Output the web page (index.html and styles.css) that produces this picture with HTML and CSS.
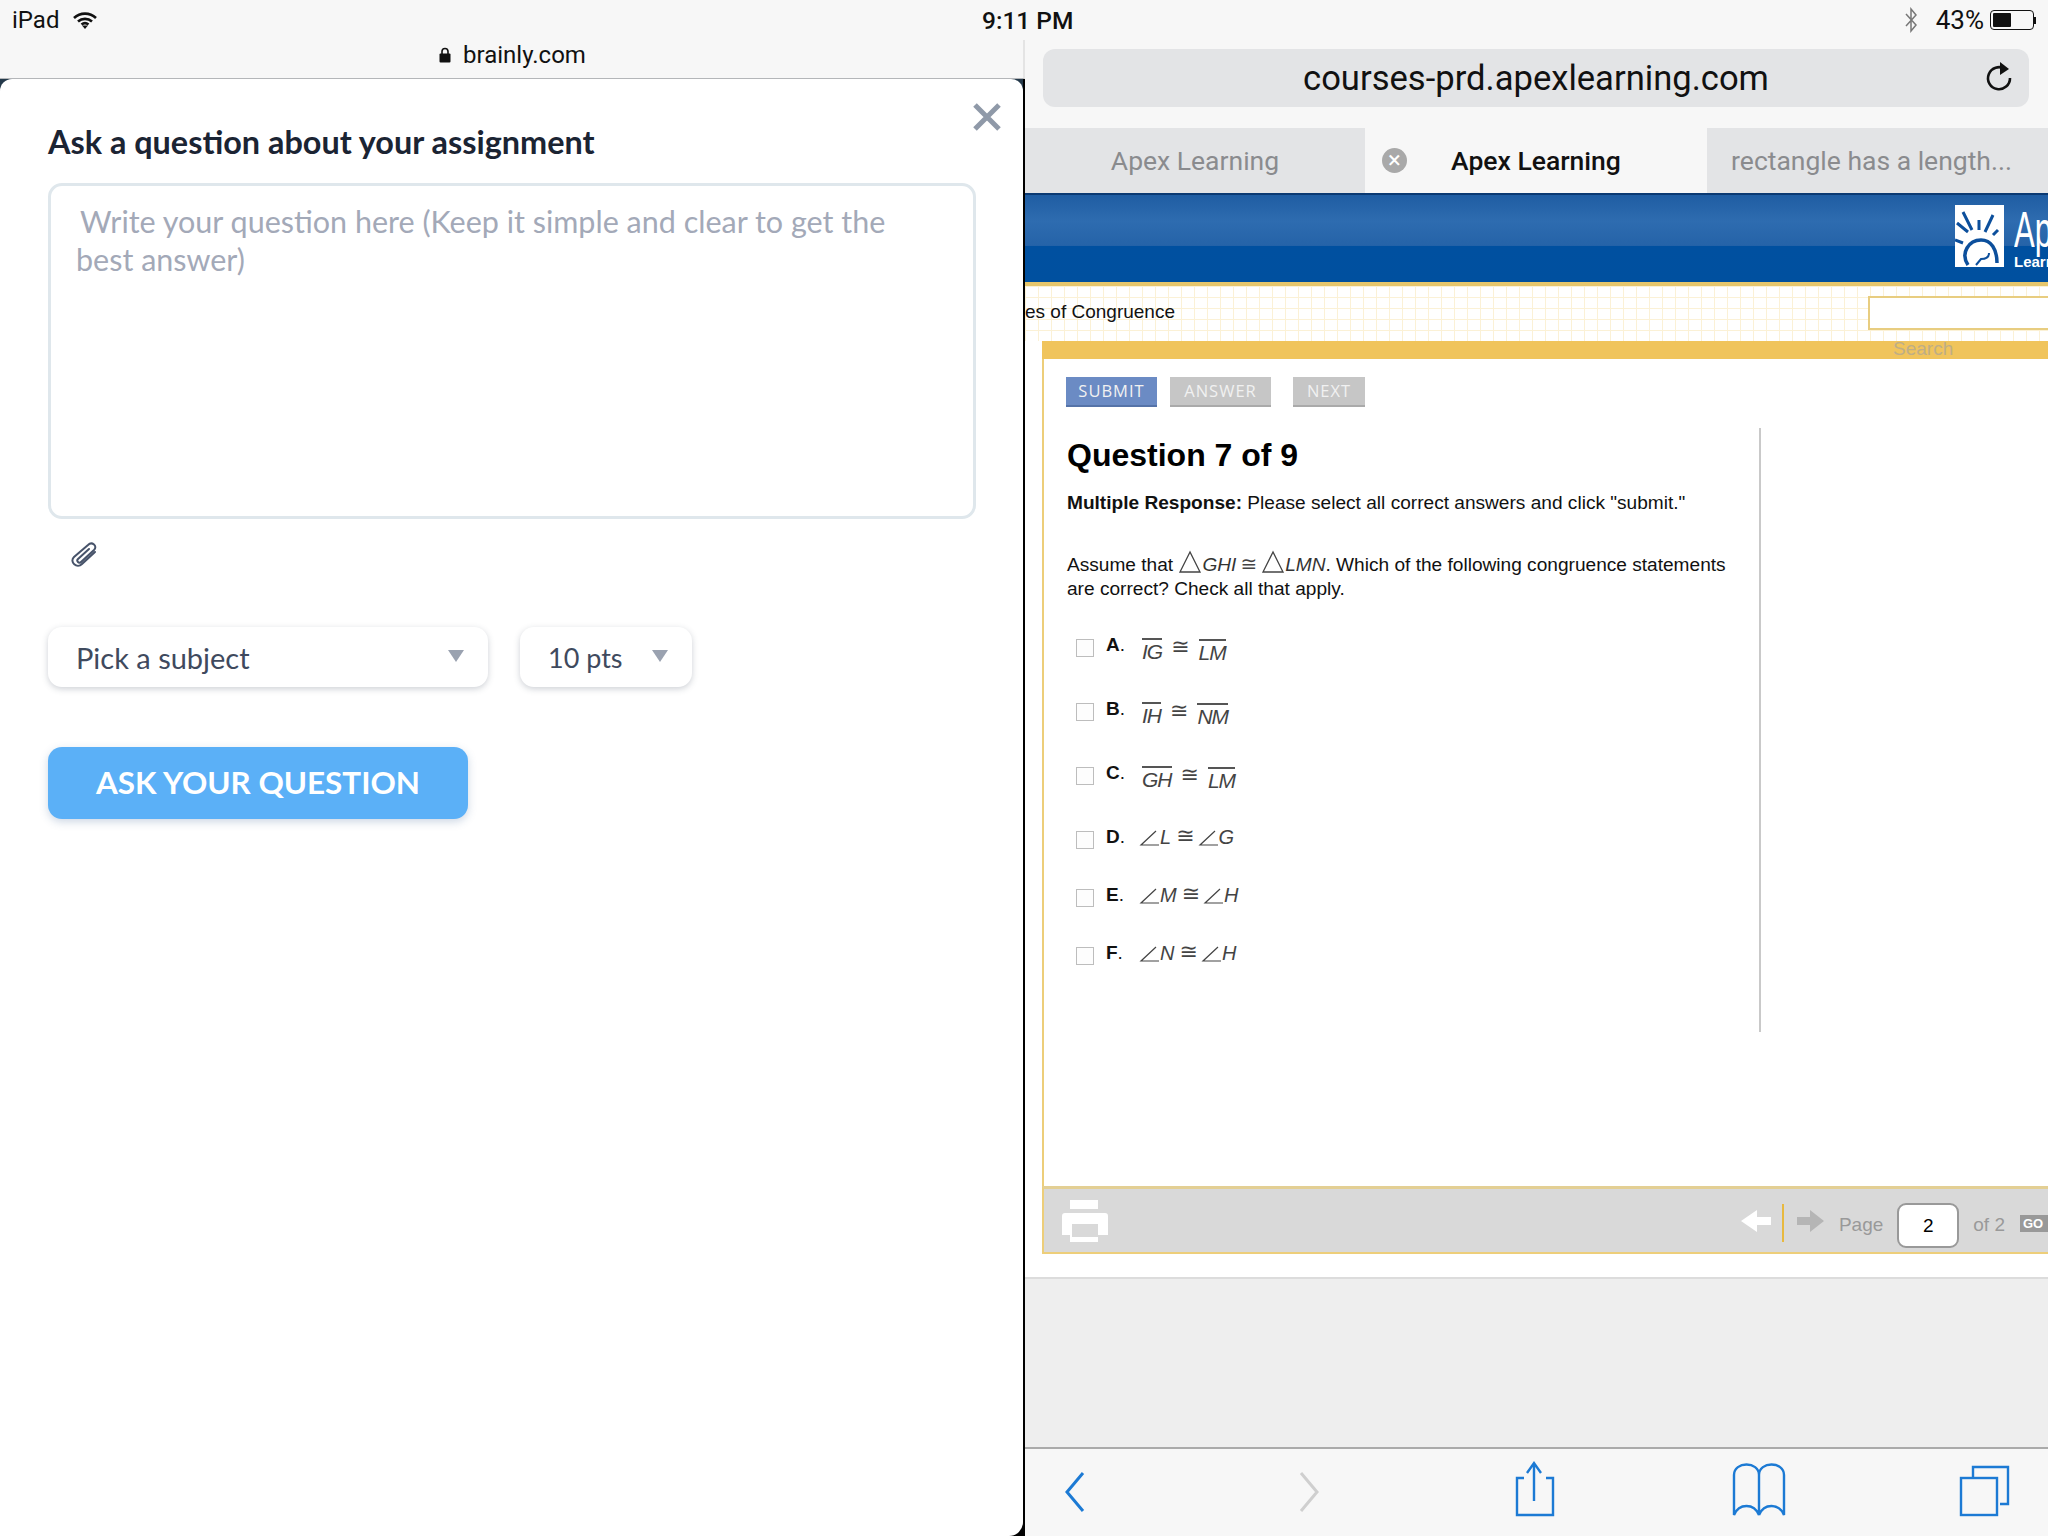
FILE: index.html
```html
<!DOCTYPE html>
<html lang="en">
<head>
  <meta charset="UTF-8">
  <title>Split view</title>
  <link rel="stylesheet" href="styles.css">
</head>
<body>
  <svg class="defs" width="0" height="0">
    <symbol id="angle" viewBox="0 0 20 16"><path d="M17 1 2 15h18" fill="none" stroke="#444" stroke-width="1.2"/></symbol>
    <symbol id="tri" viewBox="0 0 24 24"><path d="M12 2 2 22h20z" fill="none" stroke="#444" stroke-width="1.3"/></symbol>
  </svg>

  <div class="status">
    <div class="status-left">
      <span>iPad</span>
      <svg class="wifi" width="26" height="18" viewBox="0 0 26 18"><path d="M2 7a16 16 0 0 1 22 0M6 10.500a10.500 10.500 0 0 1 14 0M9.500 13.500a5.500 5.500 0 0 1 7 0" fill="none" stroke="#111" stroke-width="2.600"/><path d="M13 18l-3-3.500h6z" fill="#111"/></svg>
    </div>
    <div class="status-time">9:11 PM</div>
    <div class="status-right">
      <svg width="12" height="26" viewBox="0 0 12 26"><path d="M1 7l10 11-5 6V2l5 6L1 19" fill="none" stroke="#777" stroke-width="1.500"/></svg>
      <span>43%</span>
      <div class="battery"><div class="battery-fill"></div></div>
      <div class="battery-tip"></div>
    </div>
  </div>

  <div class="panes">
    <!-- left app: brainly -->
    <section class="left">
      <div class="left-url">
        <svg width="12" height="16" viewBox="0 0 12 16"><path d="M3 7V4.500a3 3 0 0 1 6 0V7" fill="none" stroke="#111" stroke-width="1.600"/><rect x="0.500" y="6.500" width="11" height="9" rx="1" fill="#111"/></svg>
        <span>brainly.com</span>
      </div>
      <div class="modal">
        <svg class="close" width="30" height="30" viewBox="0 0 30 30"><path d="M3 3l24 24M27 3 3 27" stroke="#8f99a8" stroke-width="5"/></svg>
        <h2 class="modal-title">Ask a question about your assignment</h2>
        <div class="question-box">
          <div class="placeholder"><span class="first-line">Write your question here (Keep it simple and clear to get the</span><br>best answer)</div>
        </div>
        <div class="attach">
          <svg width="30" height="26" viewBox="0 0 30 26"><path d="M20 7 9 17c-2 2 1 5 3 3L25 8c4-4-2-9-6-5L5 15c-5 5 3 12 8 7L26 10" fill="none" stroke="#47536a" stroke-width="2" stroke-linecap="round"/></svg>
        </div>
        <div class="selects">
          <div class="select select-subject"><span>Pick a subject</span><i class="caret"></i></div>
          <div class="select select-pts"><span>10 pts</span><i class="caret"></i></div>
        </div>
        <div class="ask-btn">ASK YOUR QUESTION</div>
      </div>
    </section>

    <!-- right app: safari -->
    <section class="right">
      <div class="addr-wrap">
        <div class="addr">
          <span>courses-prd.apexlearning.com</span>
          <svg class="reload" width="28" height="32" viewBox="0 0 28 32"><path d="M20 9a11 11 0 1 0 5 9" fill="none" stroke="#111" stroke-width="2.600"/><path d="M15 2l9 7-9 6z" fill="#111"/></svg>
        </div>
      </div>
      <div class="tabs">
        <div class="tab">Apex Learning</div>
        <div class="tab tab-active">
          <span class="tab-x">×</span>
          Apex Learning
        </div>
        <div class="tab tab-last">rectangle has a length...</div>
      </div>

      <div class="banner">
        <svg class="logo" width="49" height="62" viewBox="0 0 49 62">
          <rect width="49" height="62" fill="#fff"/>
          <path d="M8 7l9 18M24 15v10M38 10l-8 17M43 25l-5 5M2 18l11 9M0 35l8 3" stroke="#0c4f9c" stroke-width="3"/>
          <path d="M13 60C5 48 14 35 26 35c10 0 16 9 16 23" fill="none" stroke="#0c4f9c" stroke-width="3.500"/>
          <path d="M21 60l5-6c5 0 8-2 8-6" fill="none" stroke="#0c4f9c" stroke-width="2"/>
        </svg>
        <div class="logo-text">
          <div class="logo-big">Apex</div>
          <div class="logo-small">Learning</div>
        </div>
      </div>

      <div class="trail">
        <span class="trail-text">es of Congruence</span>
        <div class="search-box"></div>
      </div>
      <div class="frame">
        <div class="gold-band"><span>Search</span></div>
        <div class="frame-body">
          <div class="actions">
            <div class="act act-submit">SUBMIT</div>
            <div class="act act-answer">ANSWER</div>
            <div class="act act-next">NEXT</div>
          </div>
          <div class="question">
            <h1>Question 7 of 9</h1>
            <p class="instr"><b>Multiple Response:</b> Please select all correct answers and click "submit."</p>
            <p class="stem">Assume that <svg class="tri" width="24" height="24"><use href="#tri"/></svg><i>GHI</i><span class="cong">≅</span><svg class="tri" width="24" height="24"><use href="#tri"/></svg><i>LMN</i>. Which of the following congruence statements are correct? Check all that apply.</p>

            <div class="opts">
              <div class="opt">
                <div class="check"></div><div class="letter"><b>A</b>.</div>
                <div class="math gap-a"><span class="seg">IG</span><span class="cong">≅</span><span class="seg seg-low">LM</span></div>
              </div>
              <div class="opt">
                <div class="check"></div><div class="letter"><b>B</b>.</div>
                <div class="math gap-a"><span class="seg">IH</span><span class="cong">≅</span><span class="seg seg-low">NM</span></div>
              </div>
              <div class="opt">
                <div class="check"></div><div class="letter"><b>C</b>.</div>
                <div class="math gap-a"><span class="seg">GH</span><span class="cong">≅</span><span class="seg seg-low">LM</span></div>
              </div>
              <div class="opt opt-short">
                <div class="check"></div><div class="letter"><b>D</b>.</div>
                <div class="math gap-b"><svg class="ang" width="20" height="16"><use href="#angle"/></svg><i>L</i><span class="cong">≅</span><svg class="ang" width="20" height="16"><use href="#angle"/></svg><i>G</i></div>
              </div>
              <div class="opt opt-short">
                <div class="check"></div><div class="letter"><b>E</b>.</div>
                <div class="math gap-b"><svg class="ang" width="20" height="16"><use href="#angle"/></svg><i>M</i><span class="cong">≅</span><svg class="ang" width="20" height="16"><use href="#angle"/></svg><i>H</i></div>
              </div>
              <div class="opt opt-short">
                <div class="check"></div><div class="letter"><b>F</b>.</div>
                <div class="math gap-b"><svg class="ang" width="20" height="16"><use href="#angle"/></svg><i>N</i><span class="cong">≅</span><svg class="ang" width="20" height="16"><use href="#angle"/></svg><i>H</i></div>
              </div>
            </div>
          </div>
        </div>
        <div class="pager">
          <svg class="printer" width="46" height="42" viewBox="0 0 46 42">
            <rect x="8" y="0" width="28" height="9" fill="#fff"/>
            <path d="M3 13h40a3 3 0 0 1 3 3v19H36v7H8v-7H0V16a3 3 0 0 1 3-3z" fill="#fff"/>
            <rect x="10" y="24" width="26" height="13" fill="#d9d9d9"/>
          </svg>
          <div class="pager-right">
            <svg class="pg-arrow" width="30" height="22" viewBox="0 0 30 22"><path d="M0 11 16 0v7h14v8H16v7z" fill="#fff"/></svg>
            <div class="pager-sep"></div>
            <svg class="pg-arrow" width="27" height="22" viewBox="0 0 27 22"><path d="M27 11 13 0v7H0v8h13v7z" fill="#b5b5b5"/></svg>
            <span class="pg-word">Page</span>
            <div class="pg-input">2</div>
            <span class="pg-of">of 2</span>
            <div class="pg-go">GO</div>
          </div>
        </div>
      </div>
      <div class="below-white"></div>
      <div class="below-grey"></div>
      <div class="toolbar">
        <svg width="1023" height="89" viewBox="-1 0 1023 89">
          <g fill="none" stroke="#1c7ad4" stroke-width="2.400">
            <path d="M57 26 41 45l16 19" stroke-width="3"/>
            <path d="M275 26l16 19-16 19" stroke="#cfcfcf" stroke-width="3"/>
            <path d="M498 31h-7v37h36V31h-7M508 54V16M501 26l7-10 7 10"/>
            <path d="M708 40V28c0-14 25-14 25 0v40c-5-12-20-12-25 0zM733 28c0-14 25-14 25 0v40c-5-12-20-12-25 0"/>
            <path d="M947 31V20h35v37h-8"/>
            <rect x="935" y="31" width="36" height="37"/>
          </g>
        </svg>
      </div>
    </section>
  </div>
</body>
</html>
```

FILE: styles.css
```css
* {
  box-sizing: border-box;
}
html, body {
  margin: 0;
  height: 100%;
}
body {
  width: 2048px;
  height: 1536px;
  overflow: hidden;
  display: flex;
  flex-direction: column;
  background: #f7f7f7;
  font-family: "Liberation Sans", sans-serif;
  color: #000;
}
.defs {
  position: absolute;
}

/* status bar */
.status {
  height: 40px;
  flex: none;
  display: flex;
  justify-content: space-between;
  align-items: center;
  padding: 0 12px;
  font-family: Roboto, sans-serif;
  font-size: 24px;
  color: #111;
  position: relative;
}
.status-left {
  display: flex;
  align-items: center;
  gap: 13px;
}
.status-time {
  position: absolute;
  left: 982px;
  font-size: 24.500px;
  font-weight: 500;
}
.status-right {
  display: flex;
  align-items: center;
}
.status-right span {
  margin-left: 19px;
  margin-right: 6px;
  font-size: 26px;
}
.battery {
  width: 44px;
  height: 20px;
  border: 1px solid #111;
  border-radius: 4px;
  padding: 2px;
}
.battery-fill {
  width: 18px;
  height: 100%;
  background: #111;
  border-radius: 1px;
}
.battery-tip {
  width: 2px;
  height: 7px;
  background: #111;
}

/* the black strip between the two apps is the panes background */
.panes {
  flex: 1;
  display: flex;
  min-height: 0;
  background: #000;
}

/* left */
.left {
  width: 1023px;
  flex: none;
  display: flex;
  flex-direction: column;
  background: linear-gradient(#24394a 100px, #000 100px);
}
.left-url {
  height: 39px;
  flex: none;
  width: 1025px;
  position: relative;
  display: flex;
  align-items: flex-start;
  justify-content: center;
  gap: 12px;
  padding: 1px 0 0 2px;
  background: #f7f7f7;
  border-bottom: 1px solid #b4b6b9;
  border-right: 2px solid #e4e4e4;
  font-family: Roboto, sans-serif;
  font-size: 24px;
  line-height: 28px;
  color: #111;
}
.left-url svg {
  margin-top: 6px;
}
.modal {
  flex: 1;
  position: relative;
  background: #fff;
  border-radius: 12px 12px 14px 0;
  padding: 43px 0 0 48px;
  font-family: Lato, sans-serif;
}
.close {
  position: absolute;
  right: 21px;
  top: 23px;
}
.modal-title {
  margin: 0;
  height: 40px;
  line-height: 40px;
  font-size: 32.400px;
  font-weight: 700;
  color: #1b2433;
}
.question-box {
  margin-top: 21px;
  width: 928px;
  height: 336px;
  border: 3px solid #dfe7ec;
  border-radius: 14px;
  padding: 16px 0 0 25px;
}
.placeholder {
  font-size: 30.500px;
  line-height: 38px;
  color: #a3a9b8;
}
.first-line {
  margin-left: 4px;
}
.attach {
  height: 108px;
  padding: 23px 0 0 21px;
}
.selects {
  display: flex;
  gap: 32px;
}
.select {
  height: 60px;
  border-radius: 14px;
  background: #fff;
  box-shadow: 0 2px 6px rgba(60,70,90,0.25);
  display: flex;
  align-items: center;
  justify-content: space-between;
  font-size: 29px;
  color: #3f4a5e;
  padding-left: 28px;
}
.select-subject {
  width: 440px;
  padding-right: 24px;
}
.select-pts {
  width: 172px;
  padding-right: 24px;
  font-size: 27px;
}
.caret {
  width: 0;
  height: 0;
  border-left: 8px solid transparent;
  border-right: 8px solid transparent;
  border-top: 12px solid #9aa2b0;
  margin-bottom: 2px;
}
.ask-btn {
  margin-top: 60px;
  width: 420px;
  height: 72px;
  border-radius: 14px;
  background: #5bb0f7;
  box-shadow: 0 3px 8px rgba(60,100,150,0.25);
  color: #fff;
  font-size: 31.400px;
  font-weight: 700;
  line-height: 70px;
  text-align: center;
}

/* right */
.right {
  width: 1023px;
  flex: none;
  margin-left: 2px;
  overflow: hidden;
  display: flex;
  flex-direction: column;
  background: #fff;
}
.addr-wrap {
  background: #f7f7f7;
  height: 88px;
  flex: none;
  padding: 9px 19px 0 18px;
}
.addr {
  height: 58px;
  background: #e3e4e6;
  border-radius: 12px;
  display: flex;
  align-items: center;
  justify-content: center;
  position: relative;
  font-family: Roboto, sans-serif;
  font-size: 34.600px;
  color: #111;
}
.reload {
  position: absolute;
  right: 16px;
  top: 11px;
}
.tabs {
  height: 65px;
  flex: none;
  display: flex;
  background: #e3e4e6;
  font-family: Roboto, sans-serif;
  font-size: 26.500px;
  color: #8a8b8e;
}
.tab {
  width: 340px;
  display: flex;
  align-items: center;
  justify-content: center;
}
.tab-active {
  width: 342px;
  position: relative;
  background: #f7f7f7;
  color: #111;
  font-weight: 500;
}
.tab-last {
  width: 341px;
  padding-right: 12px;
  white-space: nowrap;
}
.tab-x {
  position: absolute;
  left: 17px;
  top: 20px;
  width: 25px;
  height: 25px;
  border-radius: 50%;
  background: #a9a9a9;
  color: #fff;
  font-size: 24px;
  font-weight: 400;
  line-height: 24px;
  text-align: center;
}
.banner {
  height: 89px;
  flex: none;
  border-top: 2px solid #0b3a73;
  background: linear-gradient(to bottom, #1f5da3 0%, #2e6cb0 30%, #2563a8 58%, #0050a0 59%, #00509f 100%);
  display: flex;
  padding: 10px 0 0 930px;
  gap: 10px;
}
.logo {
  flex: none;
}
.logo-text {
  color: #fff;
  line-height: 1;
  white-space: nowrap;
}
.logo-big {
  font-size: 50px;
  transform: scaleX(0.62);
  transform-origin: left;
}
.logo-small {
  font-size: 15px;
  font-weight: 700;
  margin-top: -1px;
}
.trail {
  height: 59px;
  flex: none;
  border-top: 4px solid #e6c66c;
  background-color: #fff;
  background-image:
    linear-gradient(to right, #fbf1d6 1px, transparent 1px),
    linear-gradient(to bottom, #fbf1d6 1px, transparent 1px);
  background-size: 13px 11px;
  display: flex;
  align-items: flex-start;
}
.trail-text {
  width: 843px;
  flex: none;
  margin-top: 15px;
  font-size: 19px;
  line-height: 22px;
  color: #111;
}
.search-box {
  width: 260px;
  flex: none;
  height: 34px;
  margin-top: 10px;
  background: #fff;
  border: 2px solid #e8cd80;
}
.frame {
  flex: none;
  margin-left: 17px;
  display: flex;
  flex-direction: column;
  height: 913px;
}
.gold-band {
  height: 18px;
  flex: none;
  background: #f0c45c;
  padding-left: 851px;
  font-size: 19px;
  line-height: 16px;
  color: #bfae86;
}
.frame-body {
  height: 827px;
  flex: none;
  border-left: 2px solid #edce7a;
  background: #fff;
}
.actions {
  display: flex;
  height: 69px;
  padding: 18px 0 0 22px;
  font-family: "Open Sans", sans-serif;
  font-size: 16.500px;
  line-height: 26px;
  color: #f1f1f1;
}
.act {
  height: 30px;
  display: flex;
  align-items: center;
  justify-content: center;
  border-bottom: 2px solid #aaa;
  letter-spacing: 1px;
}
.act-submit {
  width: 91px;
  background: #6b8bc4;
  border-bottom-color: #5573a8;
}
.act-answer {
  width: 101px;
  margin-left: 13px;
  background: #c6c6c6;
}
.act-next {
  width: 72px;
  margin-left: 22px;
  background: #c6c6c6;
}
.question {
  width: 717px;
  height: 604px;
  border-right: 2px solid #c9c9c9;
  padding: 7px 20px 0 23px;
  font-size: 19.100px;
  color: #111;
}
.question h1 {
  margin: 0;
  font-size: 32px;
  line-height: 40px;
  font-weight: 700;
  color: #000;
}
.instr {
  margin: 16px 0 0;
  line-height: 24px;
  white-space: nowrap;
}
.stem {
  margin: 37px 0 0;
  line-height: 24px;
  width: 680px;
}
.tri {
  vertical-align: -3px;
  margin-top: -10px;
}
.stem i {
  color: #333;
}
.stem .cong {
  font-size: 20px;
  margin: 0 4px;
}
.cong {
  font-family: "DejaVu Sans", sans-serif;
  font-size: 22px;
  color: #444;
}
.opts {
  margin-top: 39px;
  display: flex;
  flex-direction: column;
}
.opt {
  height: 64px;
  display: flex;
  align-items: flex-start;
  padding-left: 9px;
}
.opt-short {
  height: 58px;
}
.check {
  width: 18px;
  height: 18px;
  margin-top: -1px;
  flex: none;
  border: 1px solid #bdbdbd;
  background: #fdfdfd;
}
.letter {
  margin: -7px 0 0 12px;
  width: 36px;
  line-height: 24px;
  font-size: 19px;
}
.math {
  display: flex;
  align-items: flex-start;
  font-style: italic;
  font-size: 21px;
  line-height: 22px;
  color: #444;
}
.gap-a {
  gap: 9px;
}
.gap-a .cong {
  font-style: normal;
  margin-top: -4px;
}
.gap-b {
  gap: 1px;
  margin-left: -3px;
  margin-top: -6px;
  font-size: 20px;
}
.gap-b .cong {
  margin: -1px 2px 0 4px;
  font-style: normal;
}
.seg {
  border-top: 2px solid #555;
  margin-top: -2px;
  padding-top: 2px;
  line-height: 20px;
  letter-spacing: -1px;
}
.seg-low {
  margin-top: -1px;
}
.ang {
  margin-top: 4px;
}
.pager {
  height: 68px;
  flex: none;
  background: #d9d9d9;
  border: 2px solid #edce7a;
  border-top: 3px solid #e3cf94;
  border-right: 0;
  display: flex;
  align-items: flex-start;
  justify-content: space-between;
  padding: 13px 0 0 18px;
  color: #999;
  font-size: 19px;
}
.printer {
  margin-top: -2px;
}
.pager-right {
  display: flex;
  align-items: center;
  height: 46px;
  margin-right: -20px;
}
.pg-arrow {
  margin-bottom: 8px;
}
.pager-sep {
  width: 2px;
  height: 38px;
  background: #e8b93f;
  margin: 0 13px 4px 11px;
}
.pg-word {
  margin-left: 15px;
}
.pg-input {
  width: 62px;
  height: 45px;
  margin-left: 14px;
  background: #fff;
  border: 2px solid #999;
  border-radius: 9px;
  color: #000;
  text-align: center;
  line-height: 41px;
}
.pg-of {
  margin-left: 14px;
}
.pg-go {
  margin-left: 15px;
  width: 48px;
  height: 17px;
  background: #999;
  color: #fff;
  font-size: 13px;
  font-weight: 700;
  line-height: 17px;
  padding-left: 3px;
  margin-bottom: 3px;
}
.below-white {
  height: 25px;
  flex: none;
  background: #fff;
  border-bottom: 2px solid #dcdcdc;
}
.below-grey {
  flex: 1;
  background: #eeeeee;
}
.toolbar {
  height: 89px;
  flex: none;
  background: #f7f7f7;
  border-top: 2px solid #aaaaaa;
}
.toolbar svg {
  display: block;
  margin-top: -2px;
}
```
